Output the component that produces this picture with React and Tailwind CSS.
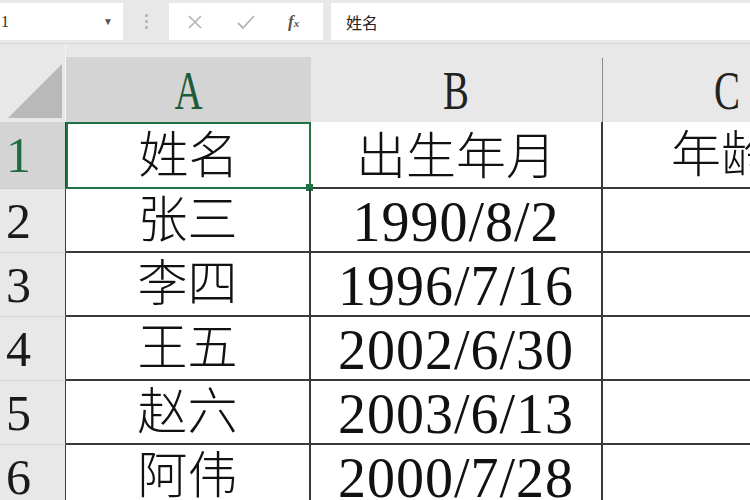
const serif = { fontFamily: '"Liberation Serif", "Noto Sans CJK SC", serif' };

const rows = [
  ["2", "张三", "1990/8/2"],
  ["3", "李四", "1996/7/16"],
  ["4", "王五", "2002/6/30"],
  ["5", "赵六", "2003/6/13"],
  ["6", "阿伟", "2000/7/28"],
];

function Toolbar() {
  return (
    <div className="flex h-[44px] items-center bg-[#e8e8e8] border-b border-[#d6d6d6]">
      <div className="flex h-[37px] w-[123px] shrink-0 items-center justify-between bg-white pl-[1px] pr-[10px]">
        <span className="text-[16px] text-[#333]" style={serif}>1</span>
        <span className="text-[10px] text-[#555]">▼</span>
      </div>
      <div className="flex w-[46px] shrink-0 flex-col items-center gap-[3px]">
        <span className="h-[3px] w-[3px] rounded-full bg-[#b0b0b0]" />
        <span className="h-[3px] w-[3px] rounded-full bg-[#b0b0b0]" />
        <span className="h-[3px] w-[3px] rounded-full bg-[#b0b0b0]" />
      </div>
      <div className="flex h-[37px] w-[154px] shrink-0 items-center bg-white">
        <svg width="18" height="18" viewBox="0 0 18 18" className="ml-[17px]">
          <path d="M3 3 L15 15 M15 3 L3 15" stroke="#b4b4b4" strokeWidth="1.6" fill="none" />
        </svg>
        <svg width="20" height="18" viewBox="0 0 20 18" className="ml-[32px]">
          <path d="M2 10 L7 15 L18 3" stroke="#b4b4b4" strokeWidth="1.8" fill="none" />
        </svg>
        <span className="ml-[32px] text-[17px] font-bold italic text-[#555]" style={serif}>
          f<span className="text-[11px]">x</span>
        </span>
      </div>
      <div className="ml-[8px] flex h-[37px] flex-1 items-center bg-white pl-[15px]">
        <span className="text-[16px] text-[#222]" style={{ fontFamily: '"Noto Sans CJK SC", sans-serif' }}>姓名</span>
      </div>
    </div>
  );
}

function Header() {
  return (
    <div className="flex h-[78px] bg-[#e8e8e8]">
      <div className="flex w-[66px] shrink-0 items-end border-r border-[#f4f4f4] pb-[4px] pl-[8px]">
        <svg width="54" height="54" viewBox="0 0 54 54">
          <polygon points="0,54 54,0 54,54" fill="#b9b9b9" />
        </svg>
      </div>
      <div className="flex w-[245px] shrink-0 items-end">
        <div className="flex h-[65px] w-full items-end justify-center bg-[#d4d4d4] pb-[4px]">
          <span className="inline-block scale-x-[0.72] text-[54px] leading-none text-[#1e5b3a]" style={serif}>A</span>
        </div>
      </div>
      <div className="flex w-[292px] shrink-0 items-end">
        <div className="flex h-[64px] w-full items-end justify-center border-r border-[#8a8a8a] pb-[4px]">
          <span className="inline-block scale-x-[0.72] text-[54px] leading-none text-[#222]" style={serif}>B</span>
        </div>
      </div>
      <div className="flex w-[240px] shrink-0 items-end justify-center pb-[4px] pl-[8px]">
        <span className="inline-block scale-x-[0.72] text-[54px] leading-none text-[#222]" style={serif}>C</span>
      </div>
    </div>
  );
}

function Row({ num, name, date, first }) {
  return (
    <div className={`flex ${first ? "h-[67px]" : "h-[64px]"}`}>
      <div
        className={`flex w-[66px] shrink-0 items-center border-b border-r pl-[6px] ${
          first ? "bg-[#d4d4d4] border-b-[#c8c8c8] border-r-[#3a3a3a]" : "bg-[#e8e8e8] border-b-[#d2d2d2] border-r-[#3a3a3a]"
        }`}
      >
        <span className={`text-[50px] leading-none ${first ? "text-[#1e6b41]" : "text-[#1a1a1a]"}`} style={serif}>
          {num}
        </span>
      </div>
      <div
        className={`relative flex w-[245px] shrink-0 items-center justify-center ${
          first ? "border-2 border-[#217346]" : "border-b-2 border-r-2 border-[#3a3a3a]"
        }`}
      >
        <span className="text-[50px] font-light leading-none text-[#111]" style={serif}>{name}</span>
        {first && <span className="absolute -bottom-[4px] -right-[4px] h-[7px] w-[7px] bg-[#217346]" />}
      </div>
      <div className="flex w-[292px] shrink-0 items-center justify-center border-b-2 border-r-2 border-[#3a3a3a] pt-[4px]">
        <span
          className={`leading-none text-[#111] ${first ? "text-[50px] font-light" : "text-[56px] tracking-[1px]"}`}
          style={serif}
        >
          {date}
        </span>
      </div>
      <div className="flex w-[240px] shrink-0 items-center overflow-hidden border-b-2 border-[#3a3a3a] pl-[68px]">
        {first && (
          <span className="whitespace-nowrap text-[50px] font-light leading-none text-[#111]" style={serif}>年龄</span>
        )}
      </div>
    </div>
  );
}

export default function App() {
  return (
    <div className="h-[500px] w-[750px] overflow-hidden bg-white">
      <Toolbar />
      <Header />
      <Row num="1" name="姓名" date="出生年月" first />
      {rows.map(([n, name, date]) => (
        <Row key={n} num={n} name={name} date={date} />
      ))}
    </div>
  );
}
